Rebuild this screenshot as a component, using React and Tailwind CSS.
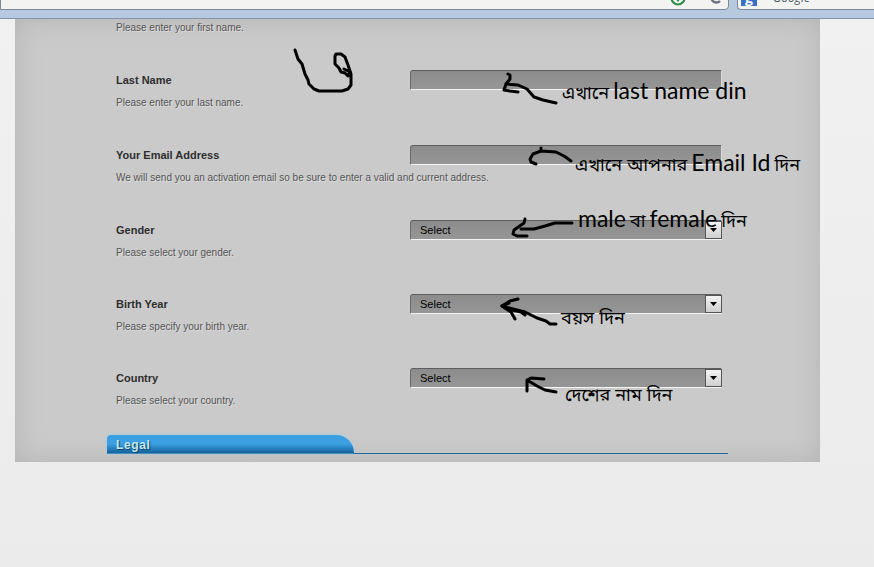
import { ChevronDown } from "lucide-react";

const fields = [
  { id: "last-name", label: "Last Name", hint: "Please enter your last name.", type: "text" },
  {
    id: "email",
    label: "Your Email Address",
    hint: "We will send you an activation email so be sure to enter a valid and current address.",
    type: "email",
  },
  { id: "gender", label: "Gender", hint: "Please select your gender.", type: "select" },
  { id: "birth-year", label: "Birth Year", hint: "Please specify your birth year.", type: "select" },
  { id: "country", label: "Country", hint: "Please select your country.", type: "select" },
];

const notes = [
  { runs: ["এখানে", "last name din"], place: "left-[547px] top-[57px]" },
  { runs: ["এখানে আপনার", "Email Id", "দিন"], place: "left-[560px] top-[129px]" },
  { runs: ["male", "বা", "female", "দিন"], place: "left-[563px] top-[185px]" },
  { runs: ["বয়স দিন"], place: "left-[546px] top-[285px]" },
  { runs: ["দেশের নাম দিন"], place: "left-[550px] top-[362px]" },
];

// pen strokes, in panel coordinates
const strokes = [
  "M280 31 L283 40 L287 45 L290 55 L293 61 L294 65 L299 70 L304 72 H327 L333 70 L336 66 V55 L333 46 L330 38 L326 35 H321 L320 37 V45 L324 49 L326 53 L330 54 L333 57 L335 53 L329 50",
  "M493 55 L495 56 V60 L491 65 L503 66 L512 70 L519 78 L528 81 L541 84",
  "M491 65 L489 71 L495 72 L503 73",
  "M556 142 L549 137 L541 133 L526 132 L518 135 L515 140 L516 143 L521 145 M526 129 V132",
  "M510 200 L509 204 L499 211 L498 215 L502 217 H512 M506 210 H519 L530 207 L540 204 H557",
  "M503 280 L495 282 L487 287 L496 293 L500 300 M487 287 L498 290 L510 293 L522 299 L531 302 L535 305 H541",
  "M487 287 L494 284 M497 291 L506 293 L510 296",
  "M529 360 L516 359 L512 361 V372 M512 361 L522 367 L530 371 L541 373",
];

const box =
  "h-5 w-full rounded-tl-[3px] border border-t-[#5e5e5e] border-r-[#d8d8d8] border-b-[#f4f4f4] border-l-[#6b6b6b] bg-linear-to-b from-[#8c8c8c] to-[#969696] outline-none";

const isLatin = (s) => /^[a-z]/i.test(s);

function Toolbar() {
  return (
    <header className="flex h-[19px] flex-col justify-end overflow-hidden border-b border-[#8295ac] bg-[#b7c9df]">
      <div className="mb-2 flex h-6 shrink-0 items-stretch gap-2">
        <div className="flex flex-1 items-center justify-end gap-2 rounded-br-sm border border-[#7b8996] bg-[#f3f4f1] pr-[6px]">
          <svg viewBox="0 0 16 16" className="h-4 w-4" aria-hidden="true">
            <circle cx="8" cy="8" r="6.5" fill="#eef6ee" stroke="#2c8a4b" strokeWidth="2.2" />
            <path d="M5 8 L8 12 L11 8 Z" fill="#2c8a4b" />
          </svg>
          <ChevronDown size={8} className="text-gray-500" />
          <svg viewBox="0 0 12 12" className="h-3 w-3 fill-none stroke-gray-500" aria-hidden="true">
            <path d="M10 2 A5 5 0 1 0 10 9" strokeWidth="2.4" />
          </svg>
        </div>
        <div className="flex w-[137px] items-center gap-1 rounded-bl-sm border border-r-0 border-[#7b8996] bg-[#f3f4f1] pl-[3px]">
          <span className="flex h-4 w-4 items-center justify-center bg-[#3b6fc4] font-['Open_Sans'] text-sm leading-3 font-bold text-white">
            g
          </span>
          <ChevronDown size={8} className="text-gray-500" />
          <span className="font-['Open_Sans'] text-xs text-gray-600 italic">Google</span>
        </div>
      </div>
    </header>
  );
}

function Hint({ children }) {
  return <p className="text-[10px] leading-4 text-[#555] [text-shadow:1px_1px_0_#dcdcdc]">{children}</p>;
}

function Control({ field }) {
  if (field.type !== "select") {
    return <input id={field.id} type={field.type} className={box} />;
  }
  return (
    <div className="relative">
      <select id={field.id} className={`${box} block appearance-none pl-[9px] text-[11px] text-black`}>
        <option>Select</option>
      </select>
      <span className="pointer-events-none absolute top-px right-0 flex h-[18px] w-[17px] items-center justify-center border border-[#555] bg-linear-to-b from-[#f4f4f4] to-[#cfcfcf]">
        <svg viewBox="0 0 7 4" className="h-1 w-[7px]" aria-hidden="true">
          <path d="M0 0 H7 L3.5 4 Z" />
        </svg>
      </span>
    </div>
  );
}

function Field({ field }) {
  const gap = field.type === "select" ? "mb-[33px]" : "mb-[34px]";
  return (
    <div className={`${gap} last:mb-[26px]`}>
      <div className="mb-[5px] grid grid-cols-[294px_1fr] items-center">
        <label htmlFor={field.id} className="text-[11px] leading-5 font-bold text-[#2e2e2e]">
          {field.label}
        </label>
        <Control field={field} />
      </div>
      <Hint>{field.hint}</Hint>
    </div>
  );
}

function Note({ runs, place }) {
  return (
    <p
      className={`pointer-events-none absolute flex items-baseline gap-1 leading-7 whitespace-nowrap text-black ${place}`}
    >
      {runs.map((run) => (
        <span key={run} className={isLatin(run) ? "font-['Lato',sans-serif] text-[23px]" : "text-[18px]"}>
          {run}
        </span>
      ))}
    </p>
  );
}

function App() {
  return (
    <div className="min-h-screen bg-linear-to-b from-[#f1f1f1] to-[#ebebeb] font-['Liberation_Sans','Noto_Sans_Bengali',sans-serif]">
      <Toolbar />
      <main className="relative mr-[54px] ml-[15px] bg-[#cacaca] px-[92px] pb-2 shadow-[inset_0_0_28px_#b4b4b4]">
        <form>
          <div className="pr-[6px] pl-[9px]">
            <div className="mb-[34px] pt-px">
              <Hint>Please enter your first name.</Hint>
            </div>
            {fields.map((field) => (
              <Field key={field.id} field={field} />
            ))}
          </div>
          <div className="border-b border-[#1a6a9e]">
            <h2 className="h-[18px] w-[247px] rounded-tl-sm rounded-tr-[18px] bg-linear-to-b from-[#3b9fe2] from-50% to-[#14639c] pl-[9px] text-[12px] leading-5 font-bold tracking-wider text-[#c5e8ee] shadow-[0_0_3px_#8fd0ee] [text-shadow:1px_1px_1px_#0e3f60]">
              Legal
            </h2>
          </div>
        </form>

        <svg
          className="pointer-events-none absolute top-0 left-0 h-[443px] w-[805px] fill-none stroke-black stroke-3"
          strokeLinecap="round"
          strokeLinejoin="round"
          aria-hidden="true"
        >
          {strokes.map((d) => (
            <path key={d} d={d} />
          ))}
        </svg>
        {notes.map((note) => (
          <Note key={note.place} runs={note.runs} place={note.place} />
        ))}
      </main>
    </div>
  );
}

export default App;
